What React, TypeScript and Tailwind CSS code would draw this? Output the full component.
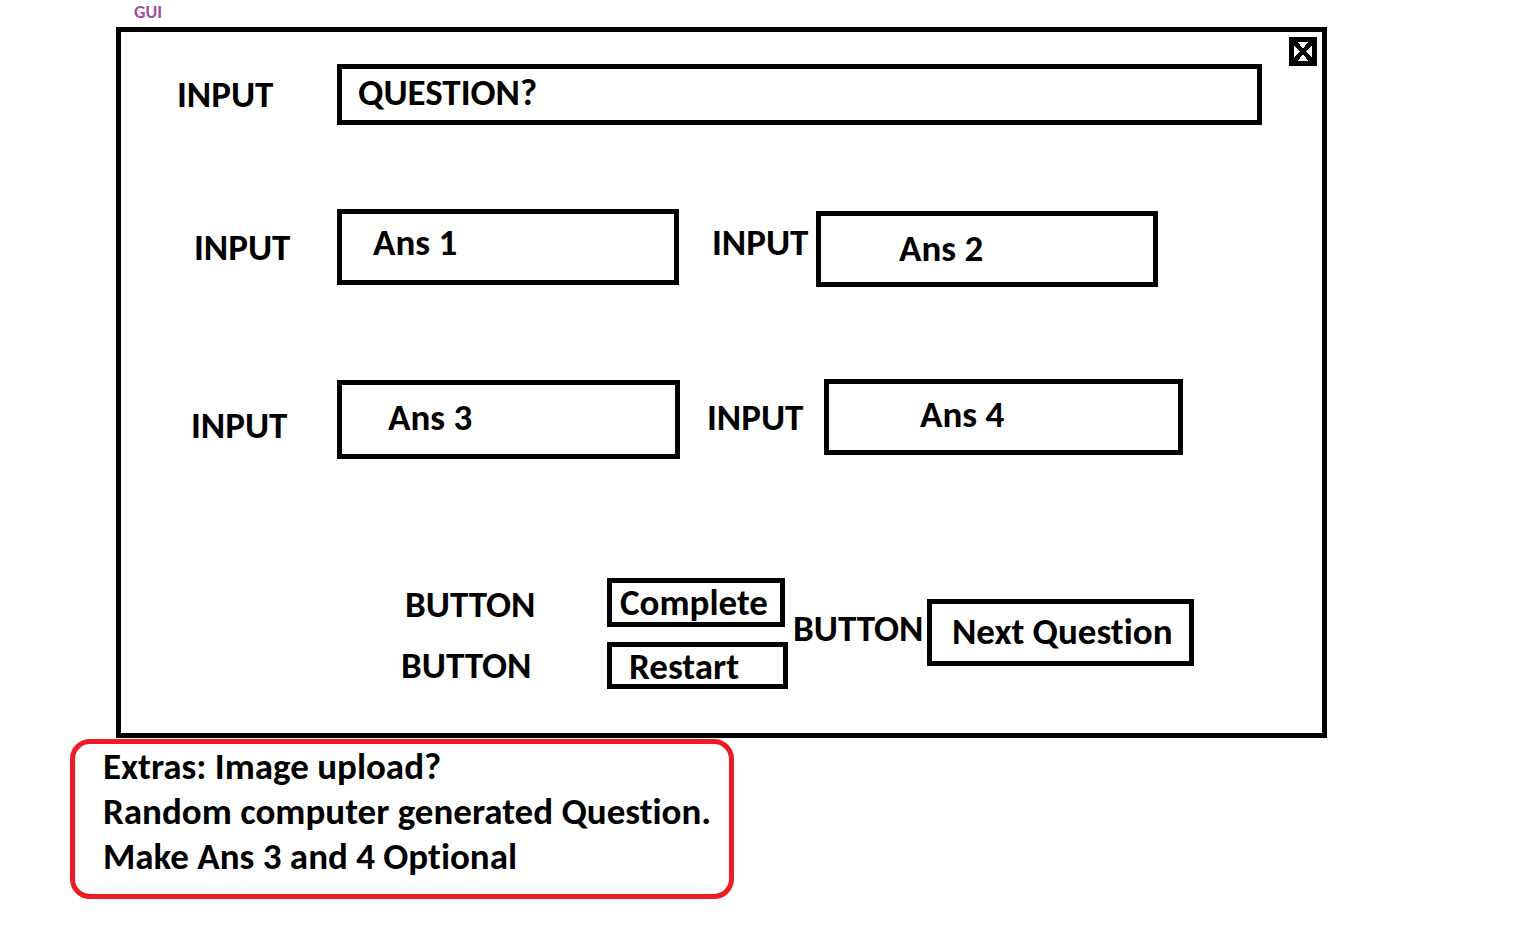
import React from "react";

const fieldClass =
  "w-full min-w-0 border-5 border-black bg-white outline-none focus:border-blue-700";

const buttonClass =
  "border-5 border-black bg-white text-left whitespace-nowrap hover:bg-gray-100";

function CloseIcon() {
  return (
    <svg
      viewBox="0 0 28 29"
      className="block h-full w-full"
      shapeRendering="crispEdges"
      aria-hidden="true"
    >
      <rect width="28" height="29" fill="#000" />
      <rect x="5" y="5" width="18" height="19" fill="#fff" />
      <path d="M5 5L23 24M23 5L5 24" stroke="#000" strokeWidth="4.6" />
    </svg>
  );
}

function QuestionRow() {
  return (
    <div className="flex items-start pt-[5px] pr-[5px]">
      <div className="flex flex-1 items-center pt-[27px]">
        <label htmlFor="question" className="w-[216px] shrink-0 pl-14">
          INPUT
        </label>
        <input
          id="question"
          type="text"
          defaultValue="QUESTION?"
          className={`${fieldClass} h-[61px] pb-[5px] pl-4`}
        />
      </div>
      <button type="button" aria-label="Close" className="ml-[27px] h-[29px] w-7 shrink-0">
        <CloseIcon />
      </button>
    </div>
  );
}

function AnswerRows() {
  return (
    <>
      <div className="mt-[84px] grid grid-cols-[216px_1fr_137px_1fr] items-start pr-[164px]">
        <label htmlFor="ans1" className="pt-[19px] pl-[73px]">
          INPUT
        </label>
        <input
          id="ans1"
          type="text"
          defaultValue="Ans 1"
          className={`${fieldClass} h-[76px] pb-[10px] pl-[31px]`}
        />
        <label htmlFor="ans2" className="pt-[14px] pl-[33px]">
          INPUT
        </label>
        <input
          id="ans2"
          type="text"
          defaultValue="Ans 2"
          className={`${fieldClass} mt-0.5 h-[76px] pb-0.5 pl-[78px]`}
        />
      </div>
      <div className="mt-[92px] grid grid-cols-[216px_343fr_144px_359fr] items-start pr-[139px]">
        <label htmlFor="ans3" className="pt-[27px] pl-[70px]">
          INPUT
        </label>
        <input
          id="ans3"
          type="text"
          defaultValue="Ans 3"
          className={`${fieldClass} mt-px h-[79px] pb-[5px] pl-[46px]`}
        />
        <label htmlFor="ans4" className="pt-[19px] pl-[27px]">
          INPUT
        </label>
        <input
          id="ans4"
          type="text"
          defaultValue="Ans 4"
          className={`${fieldClass} h-[76px] pb-[5px] pl-[91px]`}
        />
      </div>
    </>
  );
}

function Actions() {
  return (
    <div className="mt-[119px] flex items-start pb-11">
      <div className="flex flex-col gap-[15px]">
        <div className="flex items-start">
          <span id="complete-kind" className="w-[486px] pt-[7px] pl-[284px]">
            BUTTON
          </span>
          <button
            type="button"
            aria-describedby="complete-kind"
            className={`${buttonClass} h-[49px] w-[178px] pb-[5px] pl-2`}
          >
            Complete
          </button>
        </div>
        <div className="flex items-start">
          <span id="restart-kind" className="w-[486px] pt-1 pl-[280px]">
            BUTTON
          </span>
          <button
            type="button"
            aria-describedby="restart-kind"
            className={`${buttonClass} h-[47px] w-[181px] pl-[17px]`}
          >
            Restart
          </button>
        </div>
      </div>
      <div className="flex items-start pt-[21px]">
        <span id="next-kind" className="w-[139px] pt-[10px] pl-[5px]">
          BUTTON
        </span>
        <button
          type="button"
          aria-describedby="next-kind"
          className={`${buttonClass} h-[67px] w-[267px] pb-0.5 pl-5`}
        >
          Next Question
        </button>
      </div>
    </div>
  );
}

export default function App() {
  return (
    <main className="min-h-screen bg-white pb-7 font-['Carlito','Lato',sans-serif] text-[37px] leading-10 font-bold text-black [font-variant-ligatures:none]">
      <h1 className="h-[27px] pl-[134px] text-lg leading-6 text-[#a349a4]">GUI</h1>
      <form
        className="mr-[193px] ml-[116px] border-5 border-black"
        onSubmit={(event: React.FormEvent) => event.preventDefault()}
      >
        <QuestionRow />
        <AnswerRows />
        <Actions />
      </form>
      <section className="mt-px ml-[70px] h-[160px] w-[664px] rounded-[20px] border-5 border-[#ed1c24] pl-7 leading-[45px] whitespace-nowrap">
        <p>Extras: Image upload?</p>
        <p>Random computer generated Question.</p>
        <p>Make Ans 3 and 4 Optional</p>
      </section>
    </main>
  );
}
